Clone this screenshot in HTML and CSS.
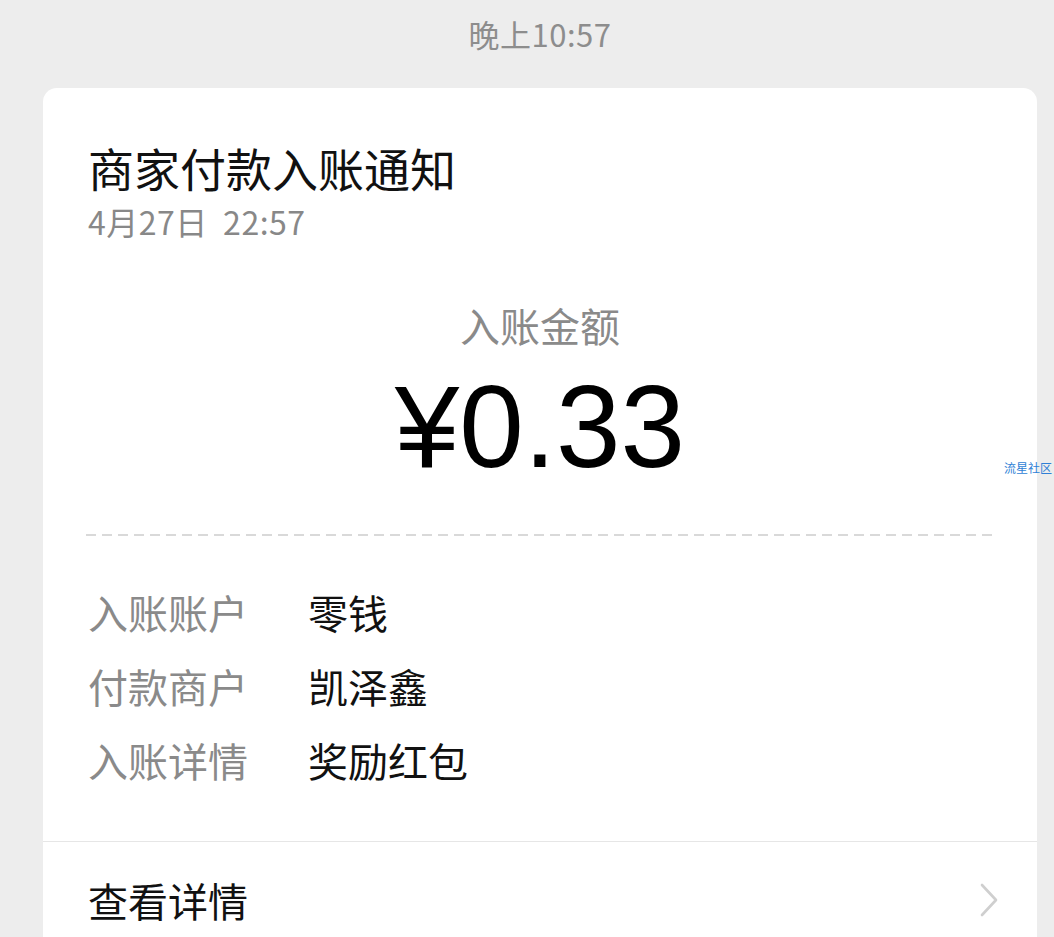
FILE: index.html
```html
<!DOCTYPE html>
<html lang="zh-CN">
<head>
<meta charset="utf-8">
<link rel="stylesheet" href="styles.css">
</head>
<body>
<div class="time">晚上10:57</div>
<div class="card">
  <div class="head">
    <div class="title">商家付款入账通知</div>
    <div class="date">4月27日&nbsp;&nbsp;22:57</div>
  </div>
  <div class="amount-block">
    <div class="amount-label">入账金额</div>
    <div class="amount">¥0.33</div>
  </div>
  <div class="dash"></div>
  <div class="rows">
    <div class="row"><span class="k">入账账户</span><span class="v">零钱</span></div>
    <div class="row"><span class="k">付款商户</span><span class="v">凯泽鑫</span></div>
    <div class="row"><span class="k">入账详情</span><span class="v">奖励红包</span></div>
  </div>
  <div class="more">
    <span>查看详情</span>
    <svg class="chev" width="20" height="36" viewBox="0 0 20 36"><path d="M3 3 L17 18 L3 33" fill="none" stroke="#cfcfcf" stroke-width="2.6" stroke-linecap="round" stroke-linejoin="round"/></svg>
  </div>
</div>
<div class="watermark">流星社区</div>
</body>
</html>
```
FILE: styles.css
```css
html, body {
  margin: 0;
  padding: 0;
  background: #ededed;
  font-family: "Noto Sans CJK SC", "Noto Sans", sans-serif;
  overflow: hidden;
  height: 937px;
}
body { position: relative; }
.time {
  height: 88px;
  line-height: 68px;
  text-align: center;
  padding-left: 26px;
  font-size: 31px;
  letter-spacing: 0.5px;
  color: #8d8d8d;
}
.card {
  margin: 0 17px 0 43px;
  background: #fff;
  border-radius: 14px 14px 0 0;
  height: 849px;
  overflow: hidden;
}
.head {
  padding: 49px 45px 0 45px;
}
.title {
  font-size: 46px;
  line-height: 60px;
  color: #111;
}
.date {
  font-size: 32px;
  line-height: 42px;
  margin-top: 3px;
  letter-spacing: 0.5px;
  color: #888;
}
.amount-block {
  text-align: center;
  padding-top: 57px;
}
.amount-label {
  font-size: 40px;
  line-height: 52px;
  color: #8a8a8a;
}
.amount {
  font-family: "Liberation Sans", "Noto Sans", sans-serif;
  font-size: 116px;
  line-height: 130px;
  color: #000;
  padding-top: 11px;
}
.dash {
  margin: 42px 42px 0 43px;
  height: 1.5px;
  background: repeating-linear-gradient(90deg, #d9d9d9 0 10px, transparent 10px 16px);
}
.rows {
  padding: 39px 45px 0 45px;
}
.row {
  display: flex;
  font-size: 40px;
  line-height: 74px;
}
.k {
  color: #8a8a8a;
  width: 220px;
}
.v {
  color: #111;
}
.more {
  margin-top: 44px;
  border-top: 1.5px solid #e6e6e6;
  display: flex;
  align-items: center;
  justify-content: space-between;
  padding: 29px 38px 0 45px;
  font-size: 40px;
  line-height: 58px;
  color: #111;
}
.chev { display: block; }
.watermark {
  position: absolute;
  left: 1004px;
  top: 460px;
  font-size: 12px;
  line-height: 16px;
  color: #2f7fd6;
  white-space: nowrap;
}
```
